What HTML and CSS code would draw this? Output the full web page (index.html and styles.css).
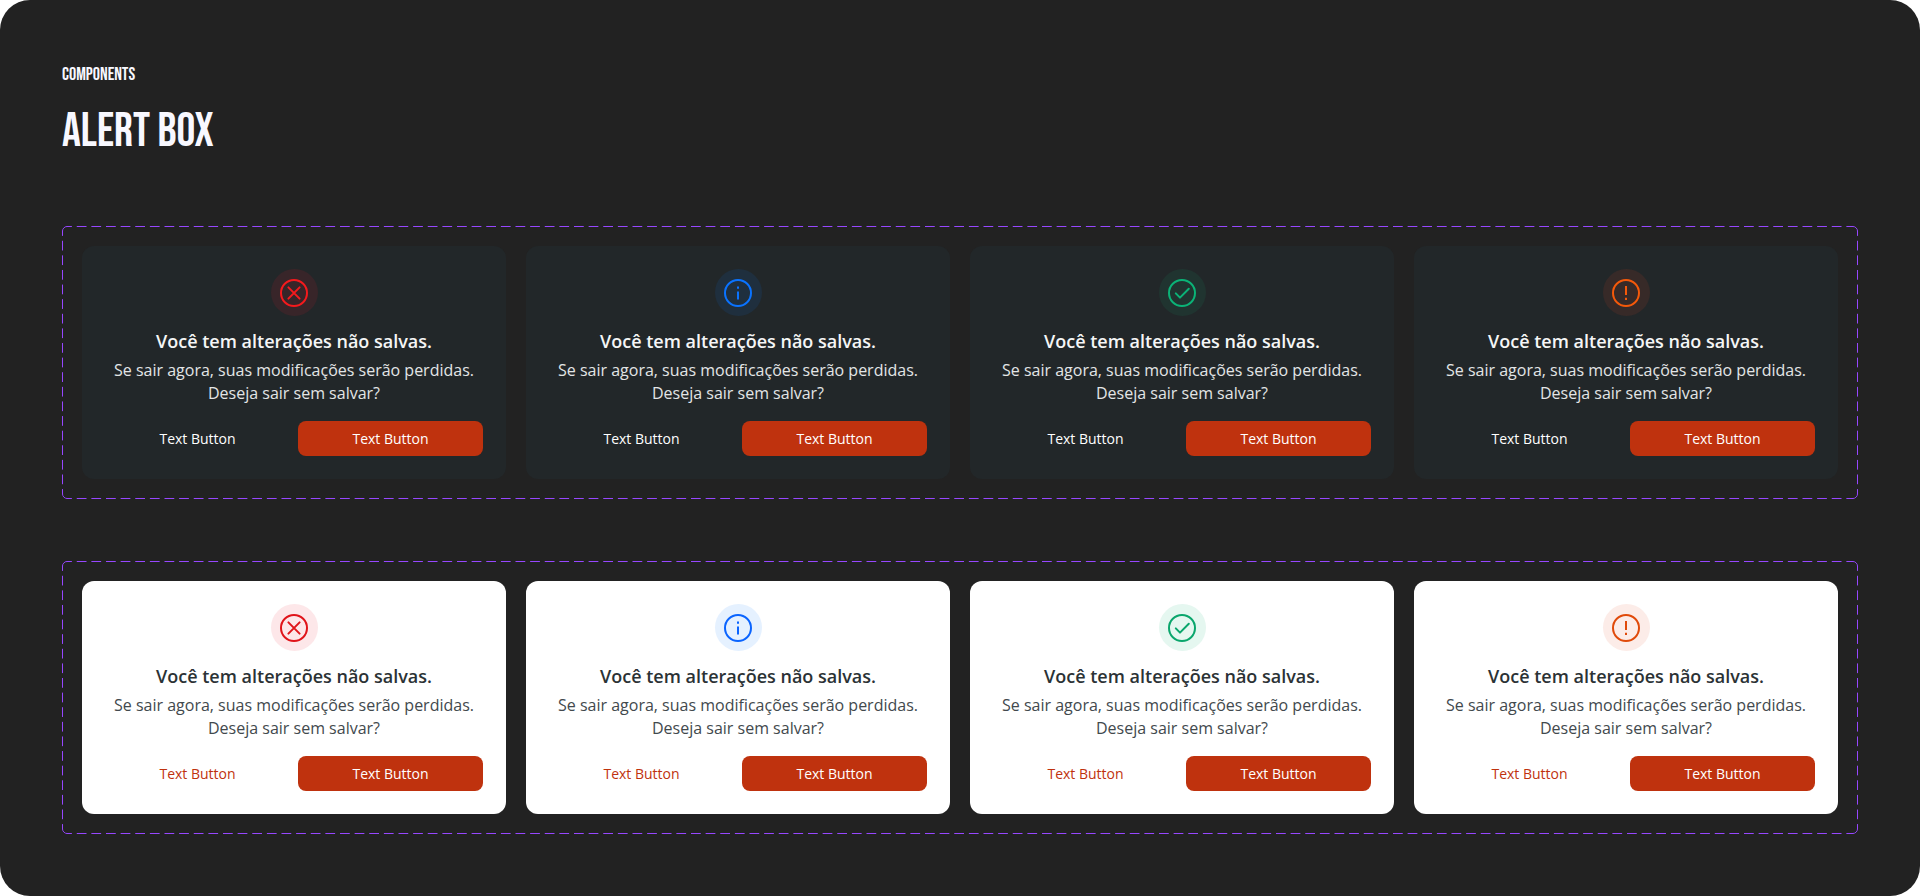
FILE: index.html
```
<!DOCTYPE html>
<html lang="pt-BR">
<head>
    <meta charset="UTF-8">
    <meta name="viewport" content="width=device-width, initial-scale=1.0">
    <title>Alert Box</title>
    <link rel="stylesheet" href="styles.css">
</head>
<body>
    <svg class="sprite" aria-hidden="true">
        <symbol id="icon-error" viewBox="0 0 28 28">
            <circle cx="14" cy="14" r="13"/>
            <path d="M8.4 8.4l11.2 11.2M19.6 8.4L8.4 19.6"/>
        </symbol>
        <symbol id="icon-info" viewBox="0 0 28 28">
            <circle cx="14" cy="14" r="13"/>
            <path d="M14 12.6v8M14 7.6v2.2" stroke-linecap="butt"/>
        </symbol>
        <symbol id="icon-success" viewBox="0 0 28 28">
            <circle cx="14" cy="14" r="13"/>
            <path d="M7.8 14.4l4.2 4.2 8.8-8.8"/>
        </symbol>
        <symbol id="icon-warning" viewBox="0 0 28 28">
            <circle cx="14" cy="14" r="13"/>
            <path d="M14 7v9M14 18.8v2.2" stroke-linecap="butt"/>
        </symbol>
    </svg>

    <main class="page">
        <header class="page-header">
            <p class="category">COMPONENTS</p>
            <h1>ALERT BOX</h1>
        </header>

        <section class="frame dark">
            <article class="alert error">
                <span class="alert-icon"><svg><use href="#icon-error"/></svg></span>
                <h2>Você tem alterações não salvas.</h2>
                <p>Se sair agora, suas modificações serão perdidas. Deseja sair sem salvar?</p>
                <div class="actions">
                    <button type="button" class="btn-text">Text Button</button>
                    <button type="button" class="btn-fill">Text Button</button>
                </div>
            </article>
            <article class="alert info">
                <span class="alert-icon"><svg><use href="#icon-info"/></svg></span>
                <h2>Você tem alterações não salvas.</h2>
                <p>Se sair agora, suas modificações serão perdidas. Deseja sair sem salvar?</p>
                <div class="actions">
                    <button type="button" class="btn-text">Text Button</button>
                    <button type="button" class="btn-fill">Text Button</button>
                </div>
            </article>
            <article class="alert success">
                <span class="alert-icon"><svg><use href="#icon-success"/></svg></span>
                <h2>Você tem alterações não salvas.</h2>
                <p>Se sair agora, suas modificações serão perdidas. Deseja sair sem salvar?</p>
                <div class="actions">
                    <button type="button" class="btn-text">Text Button</button>
                    <button type="button" class="btn-fill">Text Button</button>
                </div>
            </article>
            <article class="alert warning">
                <span class="alert-icon"><svg><use href="#icon-warning"/></svg></span>
                <h2>Você tem alterações não salvas.</h2>
                <p>Se sair agora, suas modificações serão perdidas. Deseja sair sem salvar?</p>
                <div class="actions">
                    <button type="button" class="btn-text">Text Button</button>
                    <button type="button" class="btn-fill">Text Button</button>
                </div>
            </article>
        </section>

        <section class="frame light">
            <article class="alert error">
                <span class="alert-icon"><svg><use href="#icon-error"/></svg></span>
                <h2>Você tem alterações não salvas.</h2>
                <p>Se sair agora, suas modificações serão perdidas. Deseja sair sem salvar?</p>
                <div class="actions">
                    <button type="button" class="btn-text">Text Button</button>
                    <button type="button" class="btn-fill">Text Button</button>
                </div>
            </article>
            <article class="alert info">
                <span class="alert-icon"><svg><use href="#icon-info"/></svg></span>
                <h2>Você tem alterações não salvas.</h2>
                <p>Se sair agora, suas modificações serão perdidas. Deseja sair sem salvar?</p>
                <div class="actions">
                    <button type="button" class="btn-text">Text Button</button>
                    <button type="button" class="btn-fill">Text Button</button>
                </div>
            </article>
            <article class="alert success">
                <span class="alert-icon"><svg><use href="#icon-success"/></svg></span>
                <h2>Você tem alterações não salvas.</h2>
                <p>Se sair agora, suas modificações serão perdidas. Deseja sair sem salvar?</p>
                <div class="actions">
                    <button type="button" class="btn-text">Text Button</button>
                    <button type="button" class="btn-fill">Text Button</button>
                </div>
            </article>
            <article class="alert warning">
                <span class="alert-icon"><svg><use href="#icon-warning"/></svg></span>
                <h2>Você tem alterações não salvas.</h2>
                <p>Se sair agora, suas modificações serão perdidas. Deseja sair sem salvar?</p>
                <div class="actions">
                    <button type="button" class="btn-text">Text Button</button>
                    <button type="button" class="btn-fill">Text Button</button>
                </div>
            </article>
        </section>
    </main>
</body>
</html>
```
FILE: styles.css
```
* {
    box-sizing: border-box;
}
body {
    margin: 0;
    background-color: #fff;
    font-family: "Open Sans", sans-serif;
}
h1, h2, p {
    margin: 0;
}
.sprite {
    display: none;
}
.page {
    min-height: 100vh;
    padding: 62px;
    background-color: #222;
    border-radius: 30px;
}
.page-header {
    margin-bottom: 66px;
    color: #f8f8ff;
    font-family: "Bebas Neue", "Liberation Sans Narrow", "Roboto Condensed", sans-serif;
}
.category {
    margin-bottom: 16px;
    font-size: 18px;
    line-height: 26px;
}
h1 {
    font-size: 47px;
    font-weight: normal;
    line-height: 56px;
}

/* dashed frame */
.frame {
    position: relative;
    display: grid;
    grid-template-columns: repeat(4, 1fr);
    gap: 20px;
    padding: 20px;
}
.frame + .frame {
    margin-top: 62px;
}
.frame::before {
    --dash-x: linear-gradient(90deg, #000 33%, transparent 33% 67%, #000 67%);
    --dash-y: linear-gradient(#000 33%, transparent 33% 67%, #000 67%);
    --solid: linear-gradient(#000, #000);
    content: "";
    position: absolute;
    inset: 0;
    padding: 4px;
    border: 1px solid #9747ff;
    border-radius: 5px;
    pointer-events: none;
    mask:
        var(--dash-x) 0 -5px / calc(100% / 122) 1px round no-repeat content-box border-box,
        var(--dash-x) 0 calc(100% + 5px) / calc(100% / 122) 1px round no-repeat content-box border-box,
        var(--dash-y) -5px 0 / 1px calc(100% / 18) no-repeat round content-box border-box,
        var(--dash-y) calc(100% + 5px) 0 / 1px calc(100% / 18) no-repeat round content-box border-box,
        var(--solid) 0 0 / 5px 5px no-repeat border-box,
        var(--solid) 100% 0 / 5px 5px no-repeat border-box,
        var(--solid) 0 100% / 5px 5px no-repeat border-box,
        var(--solid) 100% 100% / 5px 5px no-repeat border-box;
}

/* alert */
.alert {
    display: flex;
    flex-direction: column;
    align-items: center;
    padding: 23px;
    border-radius: 12px;
    text-align: center;
}
.alert-icon {
    display: flex;
    align-items: center;
    justify-content: center;
    width: 47px;
    height: 47px;
    margin-bottom: 12px;
    border-radius: 50%;
}
.alert-icon svg {
    width: 28px;
    height: 28px;
    fill: none;
    stroke: currentColor;
    stroke-width: 2;
    stroke-linecap: round;
    stroke-linejoin: round;
}
.alert h2 {
    margin-bottom: 4px;
    font-size: 18px;
    font-weight: 600;
    line-height: 27px;
}
.alert p {
    max-width: 370px;
    margin-bottom: 16px;
    font-size: 16px;
    line-height: 23px;
}
.actions {
    display: flex;
    gap: 8px;
    width: 100%;
}
button {
    flex: 1;
    height: 35px;
    padding: 0;
    border: none;
    border-radius: 8px;
    font-family: inherit;
    font-size: 14px;
    font-weight: 500;
    cursor: pointer;
}
.btn-text {
    background: none;
}
.btn-fill {
    background-color: #bf320e;
    color: #fff;
}

/* themes */
.dark .alert {
    background-color: #222729;
}
.dark h2 {
    color: #f5f6f6;
}
.dark p {
    color: #e3e5e6;
}
.dark .btn-text {
    color: #fff;
}
.light .alert {
    background-color: #fff;
}
.light h2 {
    color: #2b3235;
}
.light p {
    color: #42494d;
}
.light .btn-text {
    color: #bf320e;
}

/* variants */
.error .alert-icon {
    background-color: #fde7e9;
    color: #e0141a;
}
.info .alert-icon {
    background-color: #e5f1ff;
    color: #0a64ff;
}
.success .alert-icon {
    background-color: #e5f7f0;
    color: #0aa66c;
}
.warning .alert-icon {
    background-color: #fcece8;
    color: #e04a0a;
}
.dark .error .alert-icon {
    background-color: #382529;
    color: #f51a1d;
}
.dark .info .alert-icon {
    background-color: #1f2f3e;
    color: #0a73ff;
}
.dark .success .alert-icon {
    background-color: #203430;
    color: #0bb377;
}
.dark .warning .alert-icon {
    background-color: #372a28;
    color: #f5590a;
}
```
